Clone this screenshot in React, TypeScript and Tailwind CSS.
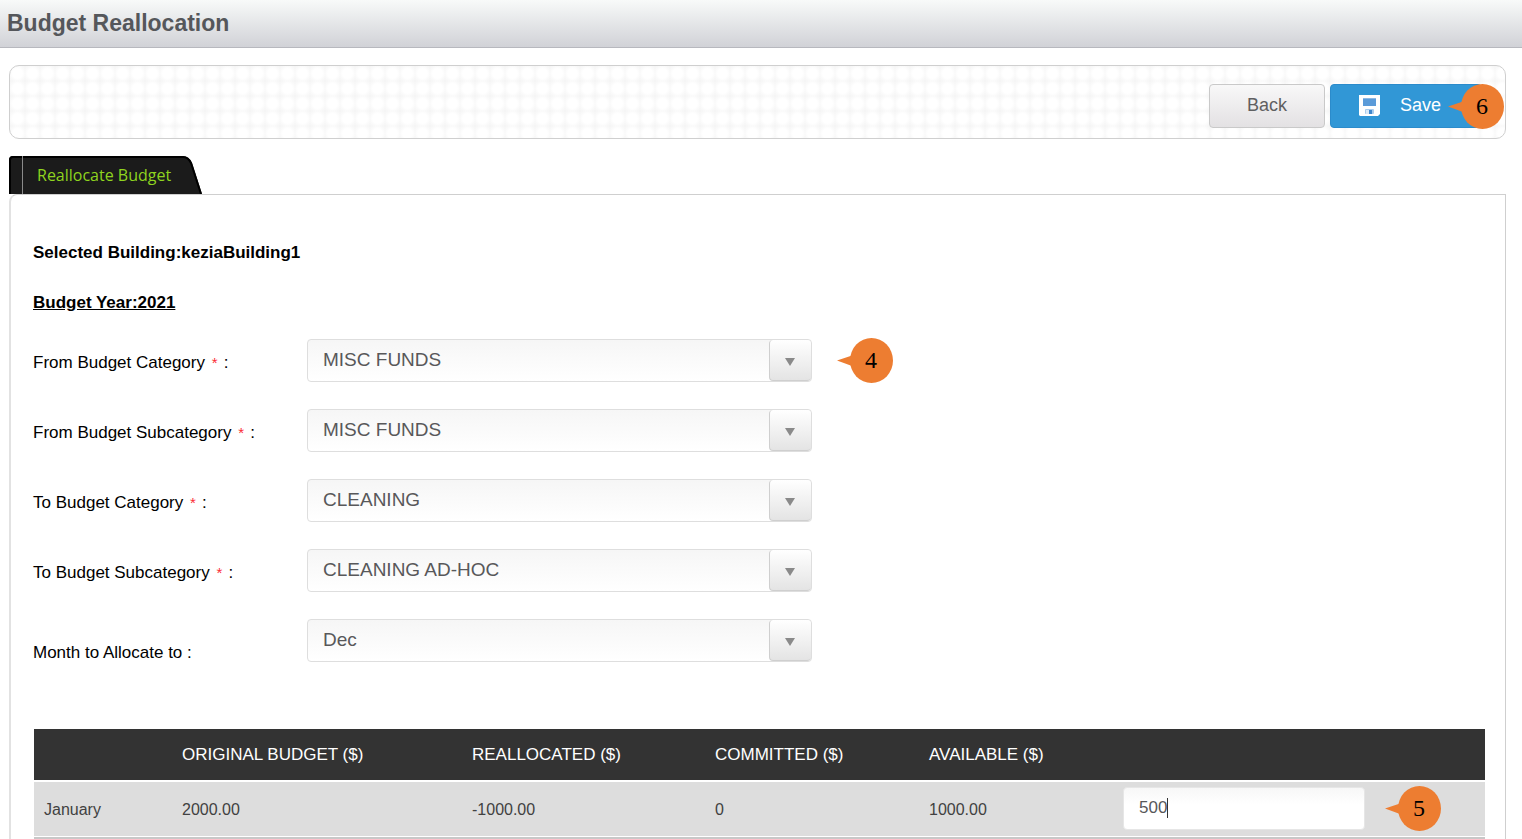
import { useState } from 'react';

const MONTHS = ['Jan', 'Feb', 'Mar', 'Apr', 'May', 'Jun', 'Jul', 'Aug', 'Sep', 'Oct', 'Nov', 'Dec'];

const FIELDS = [
  { id: 'fromCategory', label: 'From Budget Category', required: true, options: ['MISC FUNDS', 'CLEANING'], initial: 'MISC FUNDS', step: 4 },
  { id: 'fromSubcategory', label: 'From Budget Subcategory', required: true, options: ['MISC FUNDS'], initial: 'MISC FUNDS' },
  { id: 'toCategory', label: 'To Budget Category', required: true, options: ['CLEANING', 'MISC FUNDS'], initial: 'CLEANING' },
  { id: 'toSubcategory', label: 'To Budget Subcategory', required: true, options: ['CLEANING AD-HOC'], initial: 'CLEANING AD-HOC' },
  { id: 'month', label: 'Month to Allocate to', required: false, options: MONTHS, initial: 'Dec' },
];

function Callout({ step }: { step: number }) {
  return (
    <span className="relative block h-[45px] w-14 shrink-0">
      <svg className="absolute inset-0" width="56" height="45" viewBox="0 0 56 45" aria-hidden="true">
        <ellipse cx="34.5" cy="22.5" rx="21.5" ry="22.5" fill="#ed7d31" />
        <path d="M0 22.5 L15 17.5 L15 28 Z" fill="#ed7d31" />
      </svg>
      <span className="relative block pl-3 text-center font-['Liberation_Serif',serif] text-[24px] leading-[45px] text-black">
        {step}
      </span>
    </span>
  );
}

function SaveIcon() {
  return (
    <svg width="21" height="21" viewBox="0 0 21 21" aria-hidden="true">
      <path d="M0 0 H21 V19 L19 21 H1 L0 20 Z" fill="#fff" />
      <rect x="4" y="3" width="13" height="8" fill="#5b9bd9" />
      <rect x="4" y="3" width="13" height="1" fill="#8bb8e4" />
      <rect x="6" y="14" width="9" height="5" rx="1" fill="#a9cbec" />
      <rect x="7" y="15" width="4" height="4" fill="#dceaf7" />
      <rect x="10" y="15" width="3" height="4" fill="#3f86cc" />
    </svg>
  );
}

export default function App() {
  const [values, setValues] = useState<Record<string, string>>(
    Object.fromEntries(FIELDS.map((field) => [field.id, field.initial]))
  );
  const [amount, setAmount] = useState('500');

  return (
    <div className="h-screen overflow-hidden bg-white font-['Liberation_Sans',Arial,sans-serif] text-[17px] leading-5 text-black">
      <header className="flex h-12 items-center border-b border-[#b7b8be] bg-linear-to-b from-[#f8faf9] to-[#d1d2d7] px-[7px] pb-0.5">
        <h1 className="text-[23px] font-bold leading-7 text-[#55575b]">Budget Reallocation</h1>
      </header>

      <main className="ml-[9px] mr-4 mt-[17px]">
        <div className="flex h-[74px] items-start justify-end gap-[5px] rounded-[10px] border border-[#cfcfcf] bg-[radial-gradient(circle,#fff_45%,#f5f5f5_95%)] bg-size-[15px_15px] pr-[23px] pt-[18px]">
          <button
            type="button"
            className="h-11 w-[116px] rounded-sm border border-[#c9c9c9] bg-linear-to-b from-[#f8f8f8] to-[#e3e1e3] pb-0.5 text-[18px] text-[#5f5f61]"
          >
            Back
          </button>
          <div className="relative">
            <button
              type="button"
              className="flex h-11 w-[152px] items-center gap-5 rounded-sm border border-[#2b8bcb] bg-[#3197d6] pb-0.5 pl-7 text-[18px] text-white"
            >
              <SaveIcon />
              <span>Save</span>
            </button>
            <div className="absolute right-[-22px] top-0">
              <Callout step={6} />
            </div>
          </div>
        </div>

        <div className="mt-[17px] flex">
          <button
            type="button"
            className="relative h-[38px] w-[193px] pl-7 text-left font-['Open_Sans','Noto_Sans',sans-serif] text-[16px] text-[#8fd41f]"
          >
            <svg className="absolute inset-0" width="193" height="38" viewBox="0 0 193 38" aria-hidden="true">
              <path d="M0 38 V4 Q0 0 4 0 H174 Q180 0 183 7 L193 38 Z" fill="#1b1b1b" />
              <path d="M1 38 V4 Q1 1 4 1 H174 Q179 1 182 7 L192 38" fill="none" stroke="#000" strokeWidth="2" />
              <path d="M13.5 0 V38" stroke="#8a8a8a" />
            </svg>
            <span className="relative">Reallocate Budget</span>
          </button>
        </div>

        <section className="h-[700px] rounded-tl-lg border border-l-2 border-[#cfcfcf] border-l-[#e2e2e2] pl-[22px] pr-5 pt-12">
          <p className="font-bold">Selected Building:keziaBuilding1</p>
          <p className="mt-[30px] font-bold underline">Budget Year:2021</p>

          <form className="mt-[26px] flex flex-col gap-[27px]" onSubmit={(e) => e.preventDefault()}>
            {FIELDS.map((field) => (
              <div key={field.id} className="flex h-[43px] items-center">
                <label htmlFor={field.id} className={`w-[274px] shrink-0 ${field.required ? 'pt-1' : 'pt-6'}`}>
                  {field.label} {field.required && <span className="mx-0.5 text-[15px] text-red-500">* </span>}:
                </label>
                <div className="relative w-[505px]">
                  <select
                    id={field.id}
                    value={values[field.id]}
                    onChange={(e) => setValues({ ...values, [field.id]: e.target.value })}
                    className="block h-[43px] w-full appearance-none rounded-sm border border-[#dedede] bg-linear-to-b from-[#f6f6f6] to-white pb-0.5 pl-[15px] text-[19px] text-[#58585a]"
                  >
                    {field.options.map((option) => (
                      <option key={option}>{option}</option>
                    ))}
                  </select>
                  <span className="pointer-events-none absolute bottom-px right-px top-px flex w-[42px] items-center justify-center rounded-sm border-b border-l border-[#cfcfcf] bg-linear-to-b from-white to-[#e4e4e4] pr-0.5 pt-[3px]">
                    <svg width="10" height="8" viewBox="0 0 10 8" aria-hidden="true">
                      <path d="M0 0 H10 L5 8 Z" fill="#8a8a8a" />
                    </svg>
                  </span>
                </div>
                {field.step && (
                  <div className="ml-[25px]">
                    <Callout step={field.step} />
                  </div>
                )}
              </div>
            ))}
          </form>

          <div className="ml-px mt-[67px]">
            <table className="w-full table-fixed border-collapse text-left">
              <colgroup>
                <col className="w-[138px]" />
                <col className="w-[290px]" />
                <col className="w-[243px]" />
                <col className="w-[214px]" />
                <col className="w-[194px]" />
                <col />
              </colgroup>
              <thead>
                <tr className="h-[52px] border-b-2 border-white bg-[#333333] text-white">
                  <th aria-label="Month" />
                  <th className="px-2.5 font-normal">ORIGINAL BUDGET ($)</th>
                  <th className="px-2.5 font-normal">REALLOCATED ($)</th>
                  <th className="px-2.5 font-normal">COMMITTED ($)</th>
                  <th className="px-2.5 font-normal">AVAILABLE ($)</th>
                  <th aria-label="Amount" />
                </tr>
              </thead>
              <tbody>
                <tr className="h-[55px] border-b border-white bg-[#dddddd] text-[16px] text-[#414141]">
                  <td className="px-2.5 pt-0.5">January</td>
                  <td className="px-2.5 pt-0.5">2000.00</td>
                  <td className="px-2.5 pt-0.5">-1000.00</td>
                  <td className="px-2.5 pt-0.5">0</td>
                  <td className="px-2.5 pt-0.5">1000.00</td>
                  <td className="px-2.5">
                    <div className="flex items-center gap-5">
                      <div className="relative">
                        <input
                          aria-label="January amount"
                          value={amount}
                          onChange={(e) => setAmount(e.target.value)}
                          className="block h-[43px] w-[242px] rounded-sm border border-[#e6e6e6] bg-linear-to-b from-[#f7f7f7] to-white to-40% pb-0.5 pl-[15px] text-[17px] text-[#58585a] caret-transparent outline-none"
                        />
                        {/* text caret, placed after the typed amount */}
                        <span className="pointer-events-none absolute left-4 top-[11px] flex h-5 text-[17px]" aria-hidden="true">
                          <span className="invisible">{amount}</span>
                          <span className="w-px bg-[#333333]" />
                        </span>
                      </div>
                      <Callout step={5} />
                    </div>
                  </td>
                </tr>
                <tr className="h-14 bg-[#c8c8c8]">
                  <td colSpan={6} />
                </tr>
              </tbody>
            </table>
          </div>
        </section>
      </main>
    </div>
  );
}
